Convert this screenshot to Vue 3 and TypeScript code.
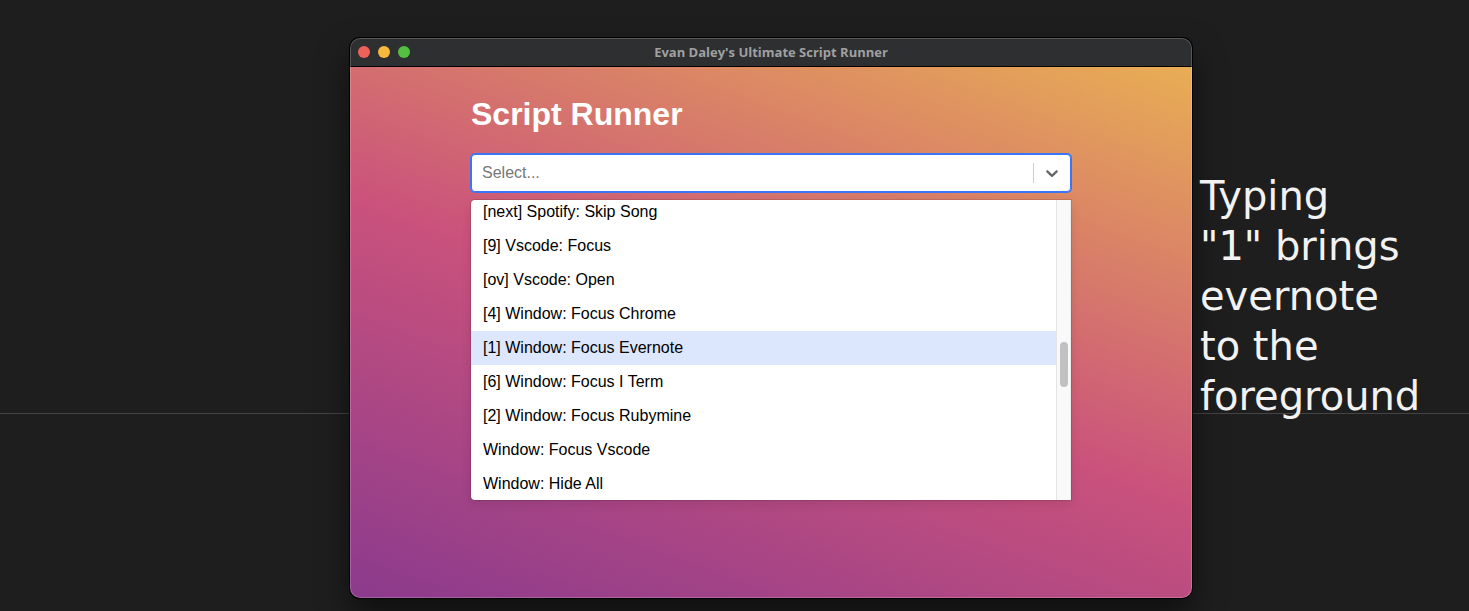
<script setup lang="ts">
import { ref } from 'vue'

interface Script {
  id: number
  label: string
}

const scripts: Script[] = [
  '[next] Spotify: Skip Song',
  '[9] Vscode: Focus',
  '[ov] Vscode: Open',
  '[4] Window: Focus Chrome',
  '[1] Window: Focus Evernote',
  '[6] Window: Focus I Term',
  '[2] Window: Focus Rubymine',
  'Window: Focus Vscode',
  'Window: Hide All',
].map((label, id) => ({ id, label }))

const query = ref('')
const focused = ref(4)
</script>

<template>
  <div class="desktop">
    <hr class="rule" />
    <main class="window">
      <header class="titlebar">
        <div class="lights">
          <button class="light close" type="button" aria-label="Close"></button>
          <button class="light minimize" type="button" aria-label="Minimize"></button>
          <button class="light maximize" type="button" aria-label="Maximize"></button>
        </div>
        <div class="caption">Evan Daley's Ultimate Script Runner</div>
      </header>
      <section class="content">
        <div class="runner">
          <h1 id="heading">Script Runner</h1>
          <div class="control">
            <input
              v-model="query"
              class="search"
              type="text"
              role="combobox"
              placeholder="Select..."
              aria-labelledby="heading"
              aria-controls="options"
              aria-expanded="true"
              :aria-activedescendant="`option-${focused}`"
            />
            <span class="separator"></span>
            <button class="toggle" type="button" aria-label="Toggle options">
              <svg viewBox="0 0 20 20" width="20" height="20" aria-hidden="true">
                <path
                  d="M4.516 7.548c0.436-0.446 1.043-0.481 1.576 0l3.908 3.747 3.908-3.747c0.533-0.481 1.141-0.446 1.574 0 0.436 0.445 0.408 1.197 0 1.615-0.406 0.418-4.695 4.502-4.695 4.502-0.217 0.223-0.502 0.335-0.787 0.335s-0.57-0.112-0.789-0.335c0 0-4.287-4.084-4.695-4.502s-0.436-1.17 0-1.615z"
                />
              </svg>
            </button>
          </div>
          <div class="menu">
            <ul id="options" class="options" role="listbox" aria-labelledby="heading">
              <li
                v-for="script in scripts"
                :id="`option-${script.id}`"
                :key="script.id"
                class="option"
                :class="{ focused: script.id === focused }"
                role="option"
                :aria-selected="script.id === focused"
                @mousemove="focused = script.id"
              >
                {{ script.label }}
              </li>
            </ul>
            <div class="track"><div class="thumb"></div></div>
          </div>
        </div>
      </section>
    </main>
    <p class="note">Typing<br />"1" brings<br />evernote<br />to the<br />foreground</p>
  </div>
</template>

<style>
body {
  margin: 0;
  background: #1e1e1e;
}
</style>

<style scoped>
.desktop {
  position: relative;
  display: grid;
  grid-template-columns: 350fr 842fr 277fr;
  box-sizing: border-box;
  min-height: 100vh;
  padding: 38px 0 13px;
  overflow: hidden;
  background: #1e1e1e;
  font-family: "Liberation Sans", Arial, sans-serif;
}

.rule {
  position: absolute;
  top: 413px;
  left: 0;
  width: 100%;
  height: 1px;
  margin: 0;
  border: 0;
  background: #444;
}

.window {
  position: relative;
  grid-column: 2;
  display: flex;
  flex-direction: column;
  border-radius: 10px;
  overflow: hidden;
  box-shadow: 0 0 0 1px #000, 0 16px 32px rgba(0, 0, 0, 0.5);
}

.window::after {
  content: "";
  position: absolute;
  inset: 0;
  border-radius: 10px;
  box-shadow: inset 0 0 0 1px rgba(255, 255, 255, 0.2);
  pointer-events: none;
}

.titlebar {
  display: grid;
  grid-template-columns: 1fr auto 1fr;
  align-items: center;
  height: 28px;
  border-bottom: 1px solid #000;
  background: #2e2f31;
}

.lights {
  display: flex;
  gap: 8px;
  padding-left: 8px;
}

.light {
  width: 12px;
  height: 12px;
  padding: 0;
  border: 0;
  border-radius: 50%;
}

.close {
  background: #ed6158;
}

.minimize {
  background: #f5b93e;
}

.maximize {
  background: #52c041;
}

.caption {
  color: #a0a0a1;
  font-family: "Open Sans", sans-serif;
  font-size: 13px;
  font-weight: 700;
  line-height: 16px;
}

.content {
  flex: 1;
  background: linear-gradient(20deg, #8b3a8d 0%, #ca527c 48%, #e8ae54 100%);
}

.runner {
  max-width: 600px;
  margin: 0 auto;
  padding-top: 28px;
}

h1 {
  margin: 0 0 21px;
  color: #fff;
  font-size: 32px;
  font-weight: 700;
  line-height: 38px;
}

.control {
  display: flex;
  align-items: center;
  box-sizing: border-box;
  height: 38px;
  border: 1px solid #3a75f6;
  border-radius: 4px;
  background: #fff;
  box-shadow: 0 0 0 1px #3a75f6;
}

.search {
  flex: 1;
  min-width: 0;
  padding: 0 10px;
  border: 0;
  outline: 0;
  background: transparent;
  color: #333;
  font: 16px/20px "Liberation Sans", Arial, sans-serif;
}

.search::placeholder {
  color: #777;
  opacity: 1;
}

.separator {
  width: 1px;
  height: 20px;
  background: #ccc;
}

.toggle {
  display: flex;
  padding: 8px;
  border: 0;
  background: transparent;
  color: #666;
}

.toggle svg {
  fill: currentColor;
}

.menu {
  display: flex;
  height: 300px;
  margin-top: 8px;
  border-radius: 4px 0 0 4px;
  overflow: hidden;
  background: #fff;
  box-shadow: 0 0 0 1px rgba(0, 0, 0, 0.1), 0 4px 11px rgba(0, 0, 0, 0.1);
}

.options {
  flex: 1;
  margin: -5px 0 0;
  padding: 0;
  list-style: none;
}

.option {
  padding: 8px 12px;
  color: #000;
  font-size: 16px;
  line-height: 18px;
}

.focused {
  background: #dce6fd;
}

.track {
  box-sizing: border-box;
  width: 15px;
  padding: 142px 2px 0 3px;
  border-left: 1px solid #e4e4e4;
  border-right: 1px solid #ececec;
  background: #f9f9f9;
}

.thumb {
  height: 45px;
  border-radius: 4px;
  background: #c1c1c1;
}

.note {
  position: relative;
  align-self: start;
  margin: 133px 0 0 8px;
  color: #f2f2f2;
  font-family: Verdana, "DejaVu Sans", sans-serif;
  font-size: 40px;
  line-height: 50px;
}
</style>
